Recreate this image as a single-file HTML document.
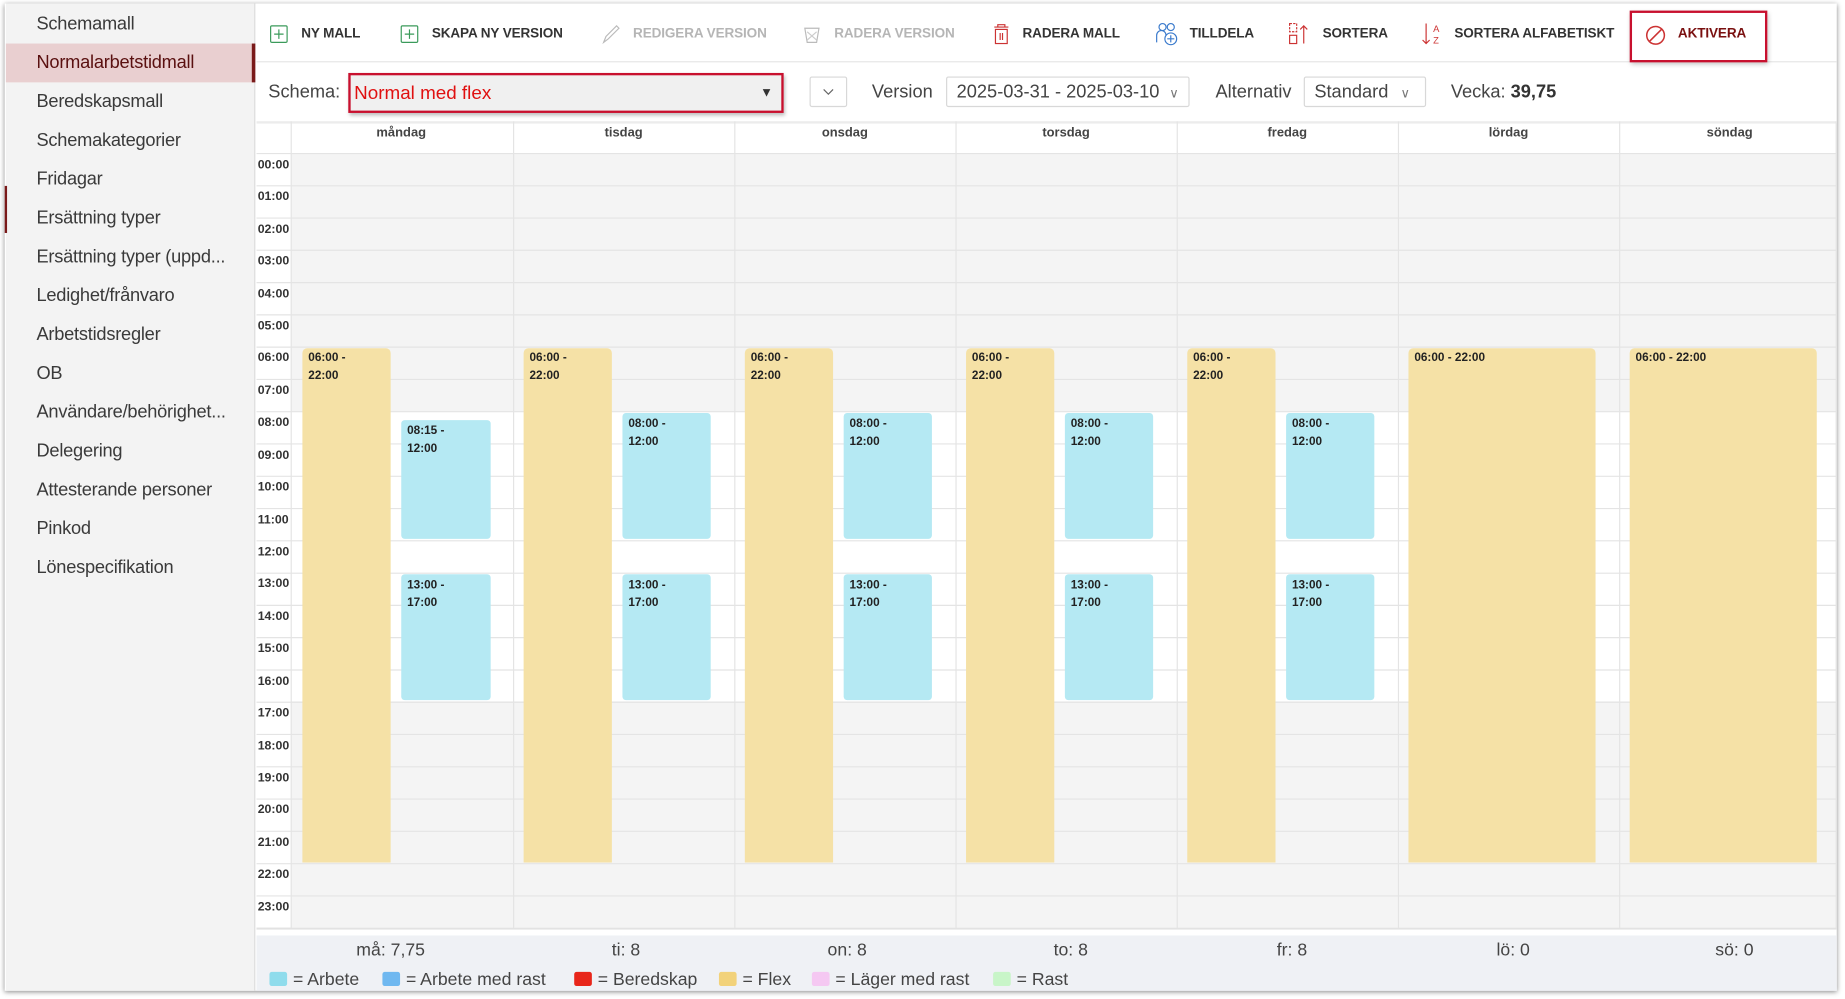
<!DOCTYPE html>
<html><head><meta charset="utf-8">
<style>
*{box-sizing:border-box;margin:0;padding:0}
html,body{width:1845px;height:999px;overflow:hidden;background:#fff}
#w{position:absolute;left:0;top:0;width:1568px;height:849px;transform:scale(1.17666);transform-origin:0 0;font-family:"Liberation Sans",sans-serif;color:#333}
.a{position:absolute}
#card{left:4px;top:3px;width:1557px;height:839px;background:#fff;box-shadow:0 1px 4px rgba(0,0,0,.45)}
#side{left:5px;top:3px;width:212px;height:839px;background:#f3f3f3;border-right:1px solid #ddd}
.si{position:absolute;left:31px;font-size:15.5px;color:#3a3a3a;white-space:nowrap;letter-spacing:-.2px}
.tb{position:absolute;top:23px;font-size:11.5px;font-weight:bold;color:#333;white-space:nowrap;letter-spacing:-.1px}
.dis{color:#b5b5b5}
.lbl{position:absolute;font-size:15.5px;color:#444}
.sel{position:absolute;border:1px solid #d8d8d8;border-radius:2px;background:#fff;font-size:15.5px;color:#444;padding:5px 8px;white-space:nowrap}
.dh{position:absolute;top:107px;width:188px;text-align:center;font-size:11px;font-weight:bold;color:#444}
.tl{position:absolute;left:219px;font-size:10.5px;font-weight:bold;color:#333}
.fx{position:absolute;background:#f5e1a6;border-radius:4px 4px 0 0;font-size:10px;font-weight:bold;color:#222;padding:1px 5px;line-height:15px}
.wk{position:absolute;background:#b5e9f3;border-radius:3px;font-size:10px;font-weight:bold;color:#222;padding:2px 5px;line-height:15px}
.sm{position:absolute;top:799px;font-size:15px;color:#444;width:188px;text-align:center}
.lg{position:absolute;top:824px;font-size:15px;color:#444;white-space:nowrap}
.sw{display:inline-block;width:15px;height:12px;border-radius:2px;vertical-align:-1px;margin-right:5px}
</style></head><body><div id="w">
<div class="a" id="card"></div>
<div class="a" id="side"></div>
<div class="a" style="left:5px;top:37px;width:212px;height:33px;background:#e9cfd0;border-right:3px solid #7a1a1a"></div>
<div class="a" style="left:4px;top:158px;width:2px;height:40px;background:#7a1a1a"></div>
<div class="si" style="top:12px">Schemamall</div>
<div class="si" style="top:45px;color:#5a1010">Normalarbetstidmall</div>
<div class="si" style="top:78px">Beredskapsmall</div>
<div class="si" style="top:111px">Schemakategorier</div>
<div class="si" style="top:144px">Fridagar</div>
<div class="si" style="top:177px">Ersättning typer</div>
<div class="si" style="top:210px">Ersättning typer (uppd...</div>
<div class="si" style="top:243px">Ledighet/frånvaro</div>
<div class="si" style="top:276px">Arbetstidsregler</div>
<div class="si" style="top:309px">OB</div>
<div class="si" style="top:342px">Användare/behörighet...</div>
<div class="si" style="top:375px">Delegering</div>
<div class="si" style="top:408px">Attesterande personer</div>
<div class="si" style="top:441px">Pinkod</div>
<div class="si" style="top:474px">Lönespecifikation</div>

<!-- toolbar -->
<div class="a" style="left:218px;top:52px;width:1343px;height:1px;background:#e6e6e6"></div>
<svg class="a" style="left:229px;top:21px" width="16" height="16"><rect x="1" y="1" width="14" height="14" rx="1" fill="none" stroke="#3a9a5a"/><path d="M8 4v8M4 8h8" stroke="#3a9a5a"/></svg>
<div class="tb" style="left:256px">NY MALL</div>
<svg class="a" style="left:340px;top:21px" width="16" height="16"><rect x="1" y="1" width="14" height="14" rx="1" fill="none" stroke="#3a9a5a"/><path d="M8 4v8M4 8h8" stroke="#3a9a5a"/></svg>
<div class="tb" style="left:367px">SKAPA NY VERSION</div>
<svg class="a" style="left:510px;top:20px" width="18" height="18"><path d="M3 16l2-5L14 2l2 2-9 9z" fill="none" stroke="#bbb"/></svg>
<div class="tb dis" style="left:538px">REDIGERA VERSION</div>
<svg class="a" style="left:681px;top:20px" width="18" height="18"><path d="M3 4h12l-2 12H5z" fill="none" stroke="#bbb"/><path d="M5 7l8 7M13 7l-8 7" stroke="#ccc"/></svg>
<div class="tb dis" style="left:709px">RADERA VERSION</div>
<svg class="a" style="left:843px;top:19px" width="16" height="19"><path d="M2 4h12M5 4V2h6v2" fill="none" stroke="#c33"/><rect x="3" y="6" width="10" height="12" fill="none" stroke="#c33"/><path d="M7 9v6M9 9v6" stroke="#c33"/></svg>
<div class="tb" style="left:869px">RADERA MALL</div>
<svg class="a" style="left:982px;top:19px" width="20" height="20"><circle cx="6" cy="4" r="3" fill="none" stroke="#3a7acc"/><circle cx="13" cy="4" r="3" fill="none" stroke="#3a7acc"/><path d="M1 17v-6a4 4 0 0 1 8 0" fill="none" stroke="#3a7acc"/><circle cx="13" cy="14" r="5" fill="none" stroke="#3a7acc"/><path d="M13 11v6M10 14h6" stroke="#3a7acc"/></svg>
<div class="tb" style="left:1011px">TILLDELA</div>
<svg class="a" style="left:1095px;top:19px" width="20" height="20"><rect x="1" y="1" width="6" height="7" fill="none" stroke="#c33" stroke-dasharray="2 1"/><rect x="1" y="11" width="6" height="7" fill="none" stroke="#c33"/><path d="M13 18V3M10 6l3-3 3 3" fill="none" stroke="#c33"/></svg>
<div class="tb" style="left:1124px">SORTERA</div>
<svg class="a" style="left:1208px;top:18px" width="18" height="22"><path d="M4 2v17M1 16l3 3 3-3" fill="none" stroke="#c33"/><text x="10" y="9" font-size="8" fill="#c33" font-family="Liberation Sans">A</text><text x="10" y="19" font-size="8" fill="#c33" font-family="Liberation Sans">Z</text></svg>
<div class="tb" style="left:1236px">SORTERA ALFABETISKT</div>
<div class="a" style="left:1385px;top:9px;width:117px;height:44px;border:2px solid #c8102e;box-shadow:1px 2px 4px rgba(0,0,0,.25)"></div>
<svg class="a" style="left:1398px;top:21px" width="18" height="18"><circle cx="9" cy="9" r="7.5" fill="none" stroke="#c33" stroke-width="1.3"/><path d="M4 14L14 4" stroke="#c33" stroke-width="1.3"/></svg>
<div class="tb" style="left:1426px;color:#7a1010">AKTIVERA</div>

<!-- row 2 -->
<div class="lbl" style="left:228px;top:70px">Schema:</div>
<div class="a" style="left:296px;top:62px;width:370px;height:34px;border:2px solid #c8102e;background:#f0f0f0;box-shadow:1px 2px 3px rgba(0,0,0,.25)"></div>
<div class="a" style="left:301px;top:71px;font-size:16px;color:#e01010">Normal med flex</div>
<div class="a" style="left:646px;top:73px;font-size:11px;color:#333">▼</div>
<div class="a" style="left:688px;top:65px;width:32px;height:26px;border:1px solid #d8d8d8;border-radius:2px"></div>
<svg class="a" style="left:699px;top:74px" width="10" height="8"><path d="M1 2l4 4 4-4" fill="none" stroke="#666"/></svg>
<div class="lbl" style="left:741px;top:70px">Version</div>
<div class="sel" style="left:804px;top:65px;width:207px;height:26px;padding:4px 8px">2025-03-31 - 2025-03-10 <span style="font-size:11px;color:#777;margin-left:4px">∨</span></div>
<div class="lbl" style="left:1033px;top:70px">Alternativ</div>
<div class="sel" style="left:1108px;top:65px;width:104px;height:26px;padding:4px 8px">Standard <span style="font-size:11px;color:#777;margin-left:6px">∨</span></div>
<div class="lbl" style="left:1233px;top:70px">Vecka: <b style="color:#333">39,75</b></div>
<div class="a" style="left:218px;top:103px;width:1343px;height:2px;background:#ececec"></div>

<!-- calendar -->
<div class="a" style="left:247px;top:130px;width:1313px;height:165px;background:#f4f4f4"></div>
<div class="a" style="left:247px;top:295px;width:1313px;height:55px;background:#f4f4f4"></div>
<div class="a" style="left:247px;top:596px;width:1313px;height:192px;background:#f4f4f4"></div>
<svg class="a" style="left:218px;top:103px" width="1343" height="687">
<g stroke="#e4e4e4" stroke-width="1">
<line x1="0" y1="27.5" x2="1343" y2="27.5"/>
<line x1="29.5" y1="0" x2="29.5" y2="687"/>
<line x1="218.5" y1="0" x2="218.5" y2="687"/>
<line x1="406.5" y1="0" x2="406.5" y2="687"/>
<line x1="594.5" y1="0" x2="594.5" y2="687"/>
<line x1="782.5" y1="0" x2="782.5" y2="687"/>
<line x1="970.5" y1="0" x2="970.5" y2="687"/>
<line x1="1158.5" y1="0" x2="1158.5" y2="687"/>
<line x1="1342.5" y1="0" x2="1342.5" y2="687"/>
<line x1="0" y1="54.9" x2="1343" y2="54.9"/><line x1="0" y1="82.3" x2="1343" y2="82.3"/><line x1="0" y1="109.7" x2="1343" y2="109.7"/><line x1="0" y1="137.2" x2="1343" y2="137.2"/><line x1="0" y1="164.6" x2="1343" y2="164.6"/><line x1="0" y1="192" x2="1343" y2="192"/><line x1="0" y1="219.5" x2="1343" y2="219.5"/><line x1="0" y1="246.9" x2="1343" y2="246.9"/><line x1="0" y1="274.3" x2="1343" y2="274.3"/><line x1="0" y1="301.8" x2="1343" y2="301.8"/><line x1="0" y1="329.2" x2="1343" y2="329.2"/><line x1="0" y1="356.6" x2="1343" y2="356.6"/><line x1="0" y1="384.1" x2="1343" y2="384.1"/><line x1="0" y1="411.5" x2="1343" y2="411.5"/><line x1="0" y1="438.9" x2="1343" y2="438.9"/><line x1="0" y1="466.4" x2="1343" y2="466.4"/><line x1="0" y1="493.8" x2="1343" y2="493.8"/><line x1="0" y1="521.2" x2="1343" y2="521.2"/><line x1="0" y1="548.7" x2="1343" y2="548.7"/><line x1="0" y1="576.1" x2="1343" y2="576.1"/><line x1="0" y1="603.5" x2="1343" y2="603.5"/><line x1="0" y1="631" x2="1343" y2="631"/><line x1="0" y1="658.4" x2="1343" y2="658.4"/><line x1="0" y1="685.8" x2="1343" y2="685.8"/>
</g></svg>
<div class="dh" style="left:247px">måndag</div><div class="dh" style="left:436px">tisdag</div><div class="dh" style="left:624px">onsdag</div><div class="dh" style="left:812px">torsdag</div><div class="dh" style="left:1000px">fredag</div><div class="dh" style="left:1188px">lördag</div><div class="dh" style="left:1376px">söndag</div>

<div class="tl" style="top:134px">00:00</div><div class="tl" style="top:161px">01:00</div><div class="tl" style="top:189px">02:00</div><div class="tl" style="top:216px">03:00</div><div class="tl" style="top:244px">04:00</div><div class="tl" style="top:271px">05:00</div><div class="tl" style="top:298px">06:00</div><div class="tl" style="top:326px">07:00</div><div class="tl" style="top:353px">08:00</div><div class="tl" style="top:381px">09:00</div><div class="tl" style="top:408px">10:00</div><div class="tl" style="top:436px">11:00</div><div class="tl" style="top:463px">12:00</div><div class="tl" style="top:490px">13:00</div><div class="tl" style="top:518px">14:00</div><div class="tl" style="top:545px">15:00</div><div class="tl" style="top:573px">16:00</div><div class="tl" style="top:600px">17:00</div><div class="tl" style="top:628px">18:00</div><div class="tl" style="top:655px">19:00</div><div class="tl" style="top:682px">20:00</div><div class="tl" style="top:710px">21:00</div><div class="tl" style="top:737px">22:00</div><div class="tl" style="top:765px">23:00</div>

<div class="fx" style="left:257px;top:296px;width:75px;height:437px">06:00 -<br>22:00</div>
<div class="fx" style="left:445px;top:296px;width:75px;height:437px">06:00 -<br>22:00</div>
<div class="fx" style="left:633px;top:296px;width:75px;height:437px">06:00 -<br>22:00</div>
<div class="fx" style="left:821px;top:296px;width:75px;height:437px">06:00 -<br>22:00</div>
<div class="fx" style="left:1009px;top:296px;width:75px;height:437px">06:00 -<br>22:00</div>
<div class="fx" style="left:1197px;top:296px;width:159px;height:437px">06:00 - 22:00</div>
<div class="fx" style="left:1385px;top:296px;width:159px;height:437px">06:00 - 22:00</div>

<div class="wk" style="left:341px;top:357px;width:76px;height:101px">08:15 -<br>12:00</div>
<div class="wk" style="left:529px;top:351px;width:75px;height:107px">08:00 -<br>12:00</div>
<div class="wk" style="left:717px;top:351px;width:75px;height:107px">08:00 -<br>12:00</div>
<div class="wk" style="left:905px;top:351px;width:75px;height:107px">08:00 -<br>12:00</div>
<div class="wk" style="left:1093px;top:351px;width:75px;height:107px">08:00 -<br>12:00</div>
<div class="wk" style="left:341px;top:488px;width:76px;height:107px">13:00 -<br>17:00</div>
<div class="wk" style="left:529px;top:488px;width:75px;height:107px">13:00 -<br>17:00</div>
<div class="wk" style="left:717px;top:488px;width:75px;height:107px">13:00 -<br>17:00</div>
<div class="wk" style="left:905px;top:488px;width:75px;height:107px">13:00 -<br>17:00</div>
<div class="wk" style="left:1093px;top:488px;width:75px;height:107px">13:00 -<br>17:00</div>

<!-- footer -->
<div class="a" style="left:218px;top:789px;width:1343px;height:1px;background:#e0e0e0"></div>
<div class="a" style="left:218px;top:795px;width:1343px;height:47px;background:#eff1f5"></div>
<div class="sm" style="left:238px">må: 7,75</div><div class="sm" style="left:438px">ti: 8</div><div class="sm" style="left:626px">on: 8</div><div class="sm" style="left:816px">to: 8</div><div class="sm" style="left:1004px">fr: 8</div><div class="sm" style="left:1192px">lö: 0</div><div class="sm" style="left:1380px">sö: 0</div>
<div class="lg" style="left:229px"><span class="sw" style="background:#8fdcec"></span>= Arbete</div>
<div class="lg" style="left:325px"><span class="sw" style="background:#6fb8f0"></span>= Arbete med rast</div>
<div class="lg" style="left:488px"><span class="sw" style="background:#e8261a"></span>= Beredskap</div>
<div class="lg" style="left:611px"><span class="sw" style="background:#f2d27a"></span>= Flex</div>
<div class="lg" style="left:690px"><span class="sw" style="background:#f5c8f2"></span>= Läger med rast</div>
<div class="lg" style="left:844px"><span class="sw" style="background:#c8f5c8"></span>= Rast</div>
</div></body></html>
